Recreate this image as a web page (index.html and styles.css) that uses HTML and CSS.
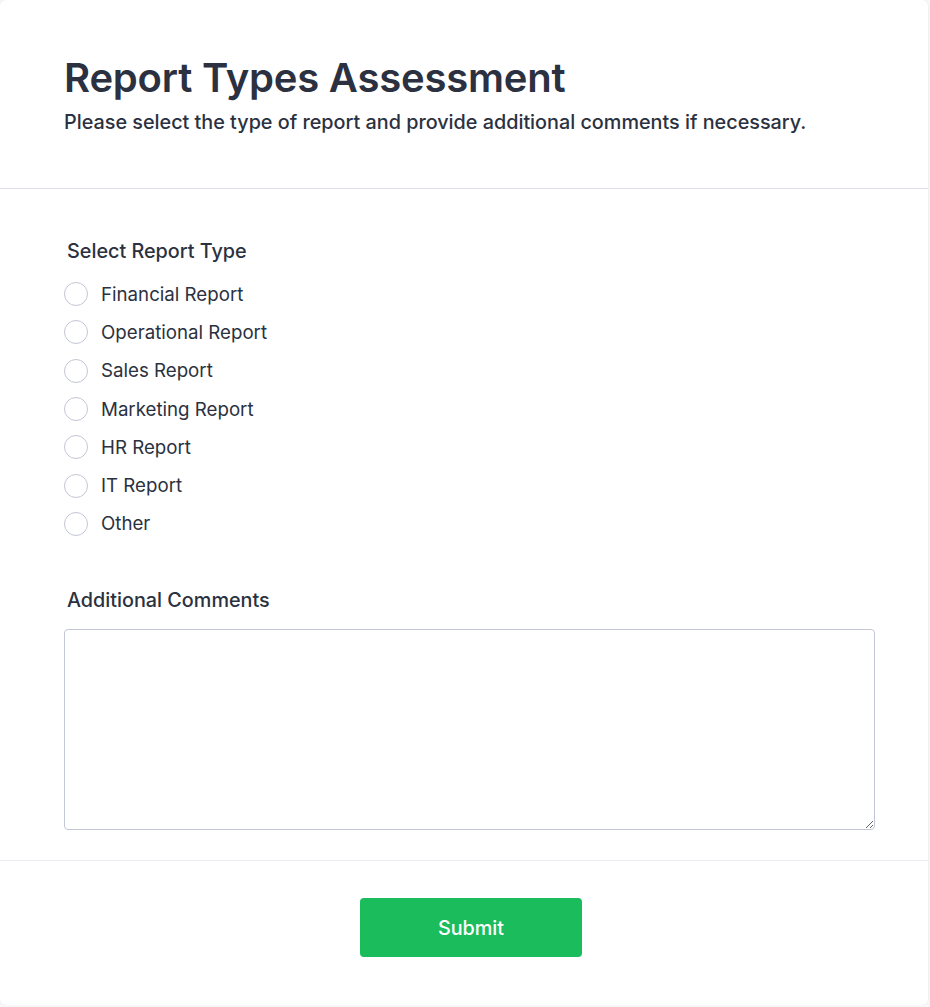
FILE: index.html
```html
<!DOCTYPE html>
<html lang="en">
<head>
<meta charset="utf-8">
<title>Report Types Assessment</title>
<link rel="stylesheet" href="styles.css">
</head>
<body>
<main class="card">
  <header class="card-header">
    <h1 class="title">Report Types Assessment</h1>
    <p class="subtitle">Please select the type of report and provide additional comments if necessary.</p>
  </header>
  <form class="card-body">
    <fieldset class="group">
      <legend class="group-label">Select Report Type</legend>
      <label class="option"><input type="radio" name="type" class="radio"><span>Financial Report</span></label>
      <label class="option"><input type="radio" name="type" class="radio"><span>Operational Report</span></label>
      <label class="option"><input type="radio" name="type" class="radio"><span>Sales Report</span></label>
      <label class="option"><input type="radio" name="type" class="radio"><span>Marketing Report</span></label>
      <label class="option"><input type="radio" name="type" class="radio"><span>HR Report</span></label>
      <label class="option"><input type="radio" name="type" class="radio"><span>IT Report</span></label>
      <label class="option"><input type="radio" name="type" class="radio"><span>Other</span></label>
    </fieldset>
    <div class="group comments">
      <label class="group-label" for="comments">Additional Comments</label>
      <textarea id="comments" class="textarea"></textarea>
    </div>
  </form>
  <footer class="card-footer">
    <button type="button" class="submit">Submit</button>
  </footer>
</main>
</body>
</html>
```

FILE: styles.css
```css
* { box-sizing: border-box; }
html, body { margin: 0; padding: 0; }
body {
  background: #f7f7fa;
  font-family: Inter, "Noto Sans", sans-serif;
  color: #2b3140;
}
.card {
  width: 928px;
  height: 1005px;
  background: #ffffff;
  border-radius: 6px;
  box-shadow: 0 0 2px rgba(0,0,0,0.08);
  display: flex;
  flex-direction: column;
}
.card-header {
  padding: 54px 64px 0;
  height: 189px;
  border-bottom: 1px solid #dedcee;
}
.title {
  margin: 0;
  font-size: 40px;
  line-height: 48px;
  font-weight: 600;
  color: #2b3140;
  letter-spacing: -0.2px;
}
.subtitle {
  margin: 7px 0 0;
  font-size: 19.8px;
  line-height: 26px;
  font-weight: 500;
  color: #2b3140;
}
.card-body {
  padding: 50px 54px 30px 64px;
  flex: 0 0 auto;
  border-bottom: 1px solid #ebecf2;
}
.group {
  border: 0;
  margin: 0;
  padding: 0;
  display: flex;
  flex-direction: column;
}
.group-label {
  padding: 0 3px;
  font-size: 19.8px;
  line-height: 24px;
  font-weight: 500;
  color: #2b3140;
  margin-bottom: 8px;
}
legend.group-label { float: left; width: 100%; margin-bottom: 12px; }
.option {
  display: flex;
  align-items: center;
  gap: 13px;
  height: 38.3px;
  font-size: 18.7px;
  color: #2b3140;
  cursor: pointer;
}
.radio {
  appearance: none;
  -webkit-appearance: none;
  margin: 0;
  width: 24px;
  height: 24px;
  border: 1px solid #c3c6d4;
  border-radius: 50%;
  background: #fff;
  flex: 0 0 auto;
}
.comments { margin-top: 45px; }
.comments .group-label { margin-bottom: 17px; }
.textarea {
  width: 811px;
  height: 201px;
  border: 1px solid #c3c6d4;
  border-radius: 4px;
  font-family: inherit;
  font-size: 16px;
  padding: 10px;
  resize: vertical;
}
.card-footer {
  display: flex;
  justify-content: center;
  padding-top: 37px;
  padding-left: 14px;
}
.submit {
  width: 222px;
  height: 59px;
  background: #1abc5c;
  color: #ffffff;
  border: 0;
  border-radius: 4px;
  font-family: inherit;
  font-size: 19.8px;
  font-weight: 500;
  cursor: pointer;
}
```
